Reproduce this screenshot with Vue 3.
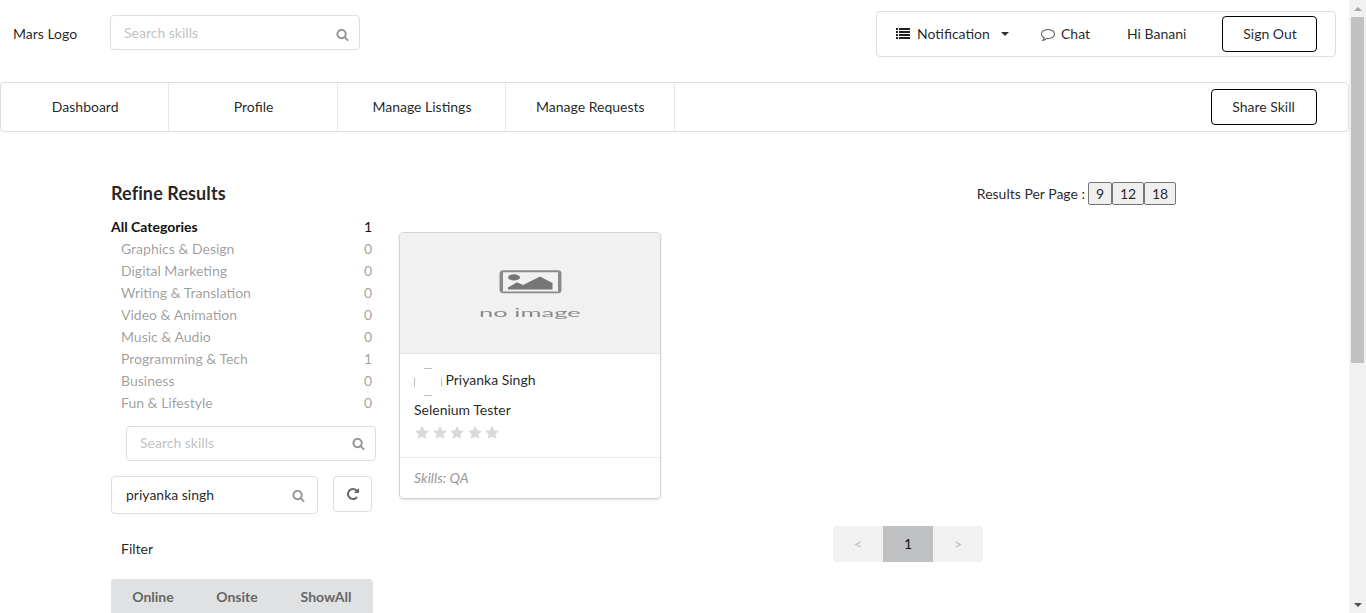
<script setup>
const icons = {
  search: 'M1216 832q0-185-131.5-316.5t-316.5-131.5-316.5 131.5-131.5 316.5 131.5 316.5 316.5 131.5 316.5-131.5 131.5-316.5zm512 832q0 52-38 90t-90 38q-54 0-90-38l-343-342q-179 124-399 124-143 0-273.5-55.5t-225-150-150-225-55.5-273.5 55.5-273.5 150-225 225-150 273.5-55.5 273.5 55.5 225 150 150 225 55.5 273.5q0 220-124 399l343 343q37 37 37 90z',
  repeat: 'M1664 256v448q0 26-19 45t-45 19h-448q-42 0-59-40-17-39 14-69l138-138q-148-137-349-137-104 0-198.5 40.5t-163.5 109.5-109.5 163.5-40.5 198.5 40.5 198.5 109.5 163.5 163.5 109.5 198.5 40.5q119 0 225-52t179-147q7-10 23-12 15 0 25 9l137 138q9 8 9.5 20.5t-7.5 22.5q-109 132-264 204.5t-327 72.5q-156 0-298-61t-245-164-164-245-61-298 61-298 164-245 245-164 298-61q147 0 284.5 55.5t244.5 156.5l130-129q29-31 70-14 39 17 39 59z',
  star: 'M1728 647q0 22-26 48l-363 354 86 500q1 7 1 20 0 21-10.5 35.5t-30.5 14.5q-19 0-40-12l-449-236-449 236q-22 12-40 12-21 0-31.5-14.5t-10.5-35.5q0-6 2-20l86-500-364-354q-25-27-25-48 0-37 56-46l502-73 225-455q19-41 49-41t49 41l225 455 502 73q56 9 56 46z',
  comment: 'M896 384q-204 0-381.5 69.5t-282 187.5-104.5 255q0 112 71.5 213.5t201.5 175.5l87 50-27 96q-24 91-70 172 152-63 275-171l43-38 57 6q69 8 130 8 204 0 381.5-69.5t282-187.5 104.5-255-104.5-255-282-187.5-381.5-69.5zm896 512q0 174-120 321.5t-326 233-450 85.5q-70 0-145-8-198 175-460 242-49 14-114 22h-5q-15 0-27-10.5t-16-27.5v-1q-3-4-.5-12t2-10 4.5-9.5l6-9 7-8.5 8-9q7-8 31-34.5t34.5-38 31-39.5 32.5-51 27-59 26-76q-157-89-247.5-220t-90.5-281q0-174 120-321.5t326-233 450-85.5 450 85.5 326 233 120 321.5z',
}
const tabs = ['Dashboard', 'Profile', 'Manage Listings', 'Manage Requests']
const categories = [
  ['Graphics & Design', 0],
  ['Digital Marketing', 0],
  ['Writing & Translation', 0],
  ['Video & Animation', 0],
  ['Music & Audio', 0],
  ['Programming & Tech', 1],
  ['Business', 0],
  ['Fun & Lifestyle', 0],
]
</script>

<template>
  <div class="window">
    <div class="page">
      <header class="top">
        <span class="logo">Mars Logo</span>
        <div class="field small">
          <span class="hint">Search skills</span>
          <svg class="icon dim" viewBox="0 0 1792 1792"><path :d="icons.search" /></svg>
        </div>
        <div class="account">
          <svg class="list-icon" viewBox="0 0 14 12" shape-rendering="crispEdges">
            <path d="M0 1h2v2H0zM3 1h11v2H3zM0 4h2v2H0zM3 4h11v2H3zM0 7h2v2H0zM3 7h11v2H3zM0 10h2v2H0zM3 10h11v2H3z" />
          </svg>
          <span class="notification">Notification</span>
          <span class="caret"></span>
          <svg class="icon chat-icon" viewBox="0 0 1792 1792"><path :d="icons.comment" /></svg>
          <span class="chat">Chat</span>
          <span class="hello">Hi Banani</span>
          <button class="outline sign-out">Sign Out</button>
        </div>
      </header>

      <nav class="tabs">
        <a v-for="t in tabs" :key="t" class="tab">{{ t }}</a>
        <button class="outline share">Share Skill</button>
      </nav>

      <main class="content">
        <aside class="side">
          <h3>Refine Results</h3>
          <div class="cat all"><b>All Categories</b><span>1</span></div>
          <div v-for="c in categories" :key="c[0]" class="cat">
            <span class="name">{{ c[0] }}</span><span>{{ c[1] }}</span>
          </div>
          <div class="field small inset">
            <span class="hint">Search skills</span>
            <svg class="icon dim" viewBox="0 0 1792 1792"><path :d="icons.search" /></svg>
          </div>
          <div class="user-row">
            <div class="field user">
              <span class="value">priyanka singh</span>
              <svg class="icon dim" viewBox="0 0 1792 1792"><path :d="icons.search" /></svg>
            </div>
            <button class="refresh">
              <svg class="icon" viewBox="0 0 1792 1792"><path :d="icons.repeat" /></svg>
            </button>
          </div>
          <div class="filter-title">Filter</div>
          <div class="filters">
            <button>Online</button><button>Onsite</button><button>ShowAll</button>
          </div>
        </aside>

        <section class="results">
          <div class="per-page">
            <span>Results Per Page :</span>
            <div class="sizes"><button class="one">9</button><button>12</button><button>18</button></div>
          </div>
          <article class="card">
            <div class="picture">
              <svg class="placeholder" viewBox="0 0 63 24">
                <rect x="1.5" y="1.2" width="60" height="21.2" rx="2.5" fill="none" stroke="#8a8a8a" stroke-width="1.9" />
                <path d="M2.5 2v19.6M60.5 2v19.6" stroke="#8a8a8a" stroke-width="3" />
                <ellipse cx="15" cy="7.4" rx="6" ry="3.1" />
                <path d="M9 19.4v-2l9-5.2 6 2.7 17-8.4L53.5 13v6.4z" />
              </svg>
              <span class="no-image">no image</span>
            </div>
            <div class="body">
              <div class="seller">
                <svg class="avatar" viewBox="0 0 28 28">
                  <path d="M.5 10v9M27.5 10v9M10 .5h8M10 27.5h8" />
                </svg>
                <span>Priyanka Singh</span>
              </div>
              <div class="service">Selenium Tester</div>
              <div class="stars">
                <svg v-for="n in 5" :key="n" viewBox="0 0 1792 1792"><path :d="icons.star" /></svg>
              </div>
            </div>
            <div class="skills">Skills: QA</div>
          </article>
          <div class="pager"><button>&lt;</button><button class="active">1</button><button>&gt;</button></div>
        </section>
      </main>
    </div>

    <div class="scrollbar">
      <span class="arrow up"></span>
      <span class="thumb"></span>
      <span class="arrow down"></span>
    </div>
  </div>
</template>

<style>
body {
  overflow: hidden;
  background: #fff;
}
</style>

<style scoped>
* {
  box-sizing: border-box;
}
.window {
  display: flex;
  height: 613px;
  overflow: hidden;
  font: 14px/20px Lato, "Liberation Sans", sans-serif;
  color: rgba(0, 0, 0, 0.87);
}
button {
  font: inherit;
  color: inherit;
  margin: 0;
  padding: 0;
}
svg {
  display: block;
  flex: none;
  fill: currentColor;
}
.page {
  width: 1349px;
  height: 613px;
  overflow: hidden;
}
.top {
  display: flex;
  align-items: flex-start;
  height: 82px;
  padding-left: 13px;
}
.logo {
  width: 97px;
  padding-top: 24px;
}
.field {
  display: flex;
  align-items: center;
  justify-content: space-between;
  border: 1px solid #dededf;
  border-radius: 4px;
}
.small {
  width: 250px;
  height: 35px;
  padding: 0 9px 0 13px;
}
.top .small {
  margin-top: 15px;
}
.hint {
  color: #c3c3c3;
}
.top .hint {
  padding-top: 1px;
}
.inset .hint {
  padding-bottom: 1px;
}
.icon {
  width: 14px;
  height: 14px;
}
.dim {
  width: 13px;
  height: 13px;
  margin-right: 1px;
  color: #949494;
}
.top .dim {
  margin-top: 3px;
}
.account {
  display: flex;
  align-items: center;
  width: 460px;
  height: 46px;
  margin: 11px 13px 0 auto;
  padding-left: 19px;
  border: 1px solid #dededf;
  border-radius: 4px;
}
.list-icon {
  width: 14px;
  height: 12px;
  margin-top: -2px;
}
.notification {
  width: 84px;
  margin-left: 7px;
}
.caret {
  border: 4px solid transparent;
  border-top-color: #333;
  border-bottom: 0;
}
.chat-icon {
  margin: 0 6px 0 32px;
  color: #555;
}
.chat {
  width: 66px;
}
.hello {
  width: 95px;
}
.outline {
  height: 36px;
  border: 1px solid #000;
  border-radius: 4px;
  background: #fff;
}
.sign-out {
  width: 95px;
  padding-left: 1px;
}
.tabs {
  display: flex;
  align-items: center;
  height: 50px;
  border: 1px solid #dededf;
  border-radius: 4px;
}
.tab {
  flex: 0 0 12.5%;
  height: 48px;
  padding-left: 1px;
  line-height: 48px;
  text-align: center;
  border-right: 1px solid #e6e6e6;
}
.share {
  width: 106px;
  margin: 0 31px 0 auto;
  padding-right: 1px;
}
.content {
  display: flex;
  padding: 50px 0 0 111px;
}
.side {
  width: 288px;
}
h3 {
  margin: 0 0 12px;
  font-size: 18px;
  line-height: 22px;
  font-weight: 700;
  letter-spacing: 0.1px;
}
.cat {
  display: flex;
  justify-content: space-between;
  width: 261px;
  height: 22px;
  line-height: 22px;
  color: rgba(0, 0, 0, 0.4);
}
.all {
  color: #111;
}
.name {
  padding-left: 10px;
}
.inset {
  margin: 12px 0 15px 15px;
}
.user-row {
  display: flex;
  gap: 15px;
}
.user {
  width: 207px;
  height: 38px;
  padding: 0 11px 0 14px;
}
.refresh {
  display: flex;
  align-items: center;
  justify-content: center;
  width: 39px;
  height: 36px;
  border: 1px solid #dededf;
  border-radius: 4px;
  background: #fff;
  color: #666;
}
.filter-title {
  margin: 25px 0 20px 10px;
}
.filters {
  display: flex;
  width: 262px;
  height: 36px;
  background: #e0e1e2;
  border-radius: 4px;
  overflow: hidden;
}
.filters button {
  flex: 0 0 84px;
  border: 0;
  background: none;
  font-weight: 700;
  color: #666;
}
.filters button:last-child {
  flex-basis: 94px;
}
.results {
  width: 777px;
}
.per-page {
  display: flex;
  justify-content: flex-end;
  gap: 3px;
  line-height: 24px;
}
.sizes {
  display: flex;
  height: 24px;
}
.sizes button {
  width: 32px;
  height: 23px;
  border: 1px solid #767676;
  border-radius: 2px;
  background: #efefef;
  line-height: 21px;
}
.sizes .one {
  width: 24px;
}
.card {
  width: 262px;
  height: 267px;
  margin-top: 26px;
  border: 1px solid #d4d4d5;
  border-radius: 4px;
  box-shadow: 0 1px 2px #dededf;
  overflow: hidden;
}
.picture {
  display: flex;
  flex-direction: column;
  align-items: center;
  height: 121px;
  padding-top: 37px;
  background: #f1f1f1;
  border-bottom: 1px solid #e2e2e2;
}
.placeholder {
  width: 63px;
  height: 24px;
  color: #757575;
  filter: blur(0.5px);
}
.no-image {
  margin-top: 7px;
  font-size: 13px;
  line-height: 22px;
  color: #8a8a8a;
  transform: scale(1.97, 0.95);
  filter: blur(0.35px);
}
.body {
  height: 103px;
  padding: 14px 14px 0;
}
.seller {
  display: flex;
  gap: 3.5px;
  height: 28px;
  line-height: 24px;
}
.avatar {
  width: 28px;
  height: 28px;
  stroke: #c0c0c0;
}
.service {
  margin-top: 4px;
}
.stars {
  display: flex;
  gap: 3.5px;
  margin: 6px 0 0 1px;
  color: #dadada;
}
.stars svg {
  width: 14px;
  height: 14px;
}
.skills {
  height: 41px;
  padding: 10px 14px;
  border-top: 1px solid #ececec;
  font-style: italic;
  color: #999;
}
.pager {
  display: flex;
  width: 150px;
  height: 36px;
  margin: 27px 0 0 434px;
  border-radius: 4px;
  background: #f1f1f1;
  overflow: hidden;
}
.pager button {
  width: 50px;
  border: 0;
  background: none;
  color: #b5b5b5;
}
.pager .active {
  background: #c0c1c2;
  color: #111;
}
.scrollbar {
  display: flex;
  flex-direction: column;
  align-items: center;
  width: 17px;
  height: 613px;
  padding: 7px 0 6px;
  background: #f1f1f1;
}
.arrow {
  border: 4px solid transparent;
}
.up {
  border-top: 0;
  border-bottom-color: #a3a3a3;
}
.down {
  margin-top: auto;
  border-bottom: 0;
  border-top-color: #505050;
}
.thumb {
  width: 13px;
  height: 346px;
  margin-top: 6px;
  background: #c1c1c1;
}
</style>
